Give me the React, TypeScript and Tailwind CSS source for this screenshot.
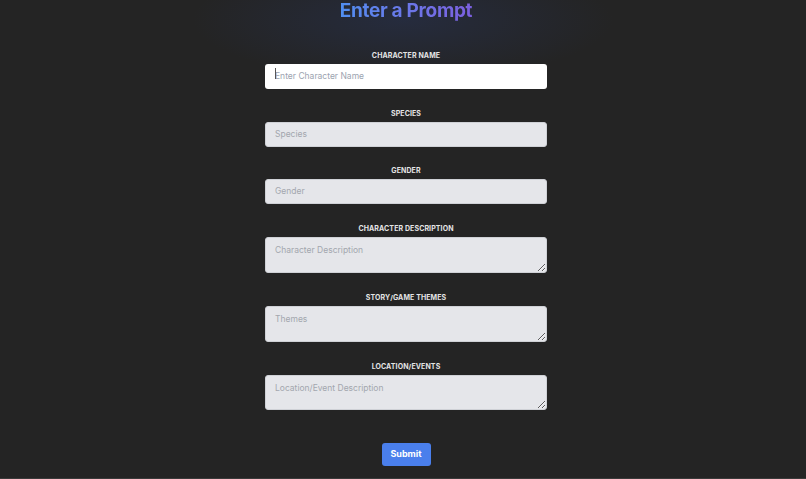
import React from 'react'

const fields = [
  { label: 'Species', placeholder: 'Species', area: false, gap: 'mb-[19px]', h: 'h-[25px]' },
  { label: 'Gender', placeholder: 'Gender', area: false, gap: 'mb-[20px]', h: 'h-[25px]' },
  { label: 'Character Description', placeholder: 'Character Description', area: true, gap: 'mb-[20px]', h: 'h-[36px]' },
  { label: 'Story/Game Themes', placeholder: 'Themes', area: true, gap: 'mb-[20px]', h: 'h-[36px]' },
  { label: 'Location/Events', placeholder: 'Location/Event Description', area: true, gap: 'mb-[19px]', h: 'h-[35px]' },
]

export default function App() {
  return (
    <div
      className="min-h-[479px] w-full bg-[#242424] border-b border-[#3a3a3a] pl-[6px] font-['Inter',sans-serif]"
      style={{ backgroundImage: 'radial-gradient(ellipse 210px 60px at 50% 20px, rgba(38,46,70,0.75), rgba(36,36,36,0) 100%)' }}
    >
      <div className="mx-auto w-[282px] flex flex-col">
        <h1 className="-mt-[1px] text-center text-[19px] leading-[24px] font-bold tracking-[-0.3px]">
          <span className="bg-gradient-to-r from-[#4f8ef0] to-[#7b5fe0] bg-clip-text text-transparent">
            Enter a Prompt
          </span>
        </h1>

        <label className="mt-[28px] mb-0 text-center text-[7px] leading-[10px] font-bold uppercase tracking-[0.1px] text-[#e5e5e5]">
          Character Name
        </label>
        <div className="relative mb-[20px]">
          <input
            placeholder="Enter Character Name"
            className="h-[25px] w-full rounded-[3px] bg-white px-[10px] text-[8.5px] text-gray-700 placeholder:text-[#9ca3af] outline-none"
          />
          <span className="absolute left-[10px] top-[7px] h-[11px] w-px bg-[#555]" />
        </div>

        {fields.map(f => (
          <div key={f.label} className={`flex flex-col ${f.gap}`}>
            <label className="mb-[3px] text-center text-[7px] leading-[10px] font-bold uppercase tracking-[0.1px] text-[#e5e5e5]">
              {f.label}
            </label>
            {f.area ? (
              <textarea
                placeholder={f.placeholder}
                className={`${f.h} w-full rounded-[3px] border border-[#cfd1d6] bg-[#e5e6ea] px-[9px] py-[6px] text-[8.5px] leading-[12px] text-gray-700 placeholder:text-[#a3a6ae] outline-none block`}
              />
            ) : (
              <input
                placeholder={f.placeholder}
                className={`${f.h} w-full rounded-[3px] border border-[#cfd1d6] bg-[#e5e6ea] px-[9px] text-[8.5px] text-gray-700 placeholder:text-[#a3a6ae] outline-none`}
              />
            )}
          </div>
        ))}

        <div className="mt-[14px] flex justify-center">
          <button className="h-[23px] w-[49px] rounded-[3px] bg-[#4a7fec] text-[9px] font-bold text-white">
            Submit
          </button>
        </div>
      </div>
    </div>
  )
}
